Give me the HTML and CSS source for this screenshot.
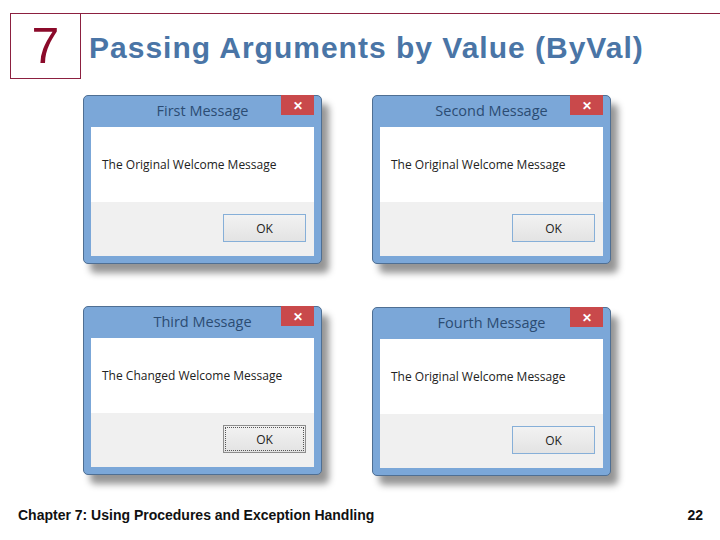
FILE: index.html
```html
<!DOCTYPE html>
<html lang="en">
<head>
    <meta charset="UTF-8">
    <meta name="viewport" content="width=device-width, initial-scale=1.0">
    <title>Passing Arguments by Value (ByVal)</title>
    <link rel="stylesheet" href="styles.css">
</head>
<body>
    <div class="slide-header">
        <div class="chapter-box">7</div>
        <h1 class="slide-title">Passing Arguments by Value (ByVal)</h1>
    </div>

    <div class="dialog-grid">
        <div class="dialog">
            <div class="titlebar">First Message<span class="close">&#x2715;</span></div>
            <div class="message">The Original Welcome Message</div>
            <div class="buttons"><button class="ok">OK</button></div>
        </div>
        <div class="dialog">
            <div class="titlebar">Second Message<span class="close">&#x2715;</span></div>
            <div class="message">The Original Welcome Message</div>
            <div class="buttons"><button class="ok">OK</button></div>
        </div>
        <div class="dialog">
            <div class="titlebar">Third Message<span class="close">&#x2715;</span></div>
            <div class="message">The Changed Welcome Message</div>
            <div class="buttons"><button class="ok focused">OK</button></div>
        </div>
        <div class="dialog lower">
            <div class="titlebar">Fourth Message<span class="close">&#x2715;</span></div>
            <div class="message">The Original Welcome Message</div>
            <div class="buttons"><button class="ok">OK</button></div>
        </div>
    </div>

    <div class="slide-footer">
        <span>Chapter 7: Using Procedures and Exception Handling</span>
        <span>22</span>
    </div>
</body>
</html>
```

FILE: styles.css
```css
body {
    margin: 0;
    padding: 0;
    background-color: #fff;
    font-family: "Liberation Sans", Arial, sans-serif;
    width: 720px;
    height: 540px;
    overflow: hidden;
}
.slide-header {
    display: flex;
    margin: 13px 0 0 10px;
    border-top: 1px solid #8c2040;
    height: 65px;
}
.chapter-box {
    width: 69px;
    border: 1px solid #8c2040;
    border-top: none;
    display: flex;
    justify-content: center;
    align-items: center;
    font-size: 50px;
    color: #8b0a2a;
}
.slide-title {
    margin: 0;
    padding: 3px 0 0 8px;
    display: flex;
    align-items: center;
    font-size: 30px;
    letter-spacing: 1px;
    font-weight: bold;
    color: #4a75a6;
}
.dialog-grid {
    display: grid;
    grid-template-columns: 239px 239px;
    column-gap: 50px;
    row-gap: 42px;
    margin: 16px 0 0 83px;
}
.dialog {
    height: 169px;
    box-sizing: border-box;
    display: flex;
    flex-direction: column;
    background-color: #7ba7d8;
    border: 1px solid #4f6f93;
    border-radius: 5px;
    padding: 0 7px 7px;
    box-shadow: 7px 9px 7px rgba(0, 0, 0, 0.42);
    font-family: "Open Sans", "Noto Sans", sans-serif;
}
.dialog.lower {
    margin-top: 1px;
}
.titlebar {
    position: relative;
    height: 31px;
    box-sizing: border-box;
    padding-bottom: 3px;
    display: flex;
    justify-content: center;
    align-items: center;
    font-size: 14.5px;
    color: #2b4c73;
}
.close {
    position: absolute;
    right: 0;
    top: -1px;
    width: 33px;
    height: 20px;
    background-color: #c9494b;
    color: #fff;
    font-size: 12px;
    font-weight: bold;
    display: flex;
    justify-content: center;
    align-items: center;
}
.message {
    height: 75px;
    background-color: #fff;
    display: flex;
    align-items: center;
    padding-left: 11px;
    font-size: 12px;
    color: #222;
}
.buttons {
    flex: 1;
    background-color: #f0f0f0;
    display: flex;
    justify-content: flex-end;
    align-items: flex-start;
    padding: 12px 8px 0 0;
}
.ok {
    width: 83px;
    height: 28px;
    border: 1px solid #86afd8;
    background: linear-gradient(#f2f2f2, #e3e3e3);
    font-family: "Open Sans", "Noto Sans", sans-serif;
    font-size: 12px;
    color: #222;
    padding: 0;
}
.ok.focused {
    border: 1px solid #8d8d8d;
    outline: 1px dotted #555;
    outline-offset: -3px;
}
.slide-footer {
    display: flex;
    justify-content: space-between;
    margin-top: 31px;
    padding: 0 17px 0 18px;
    font-size: 14px;
    font-weight: bold;
    line-height: 16px;
    color: #111;
}
```
